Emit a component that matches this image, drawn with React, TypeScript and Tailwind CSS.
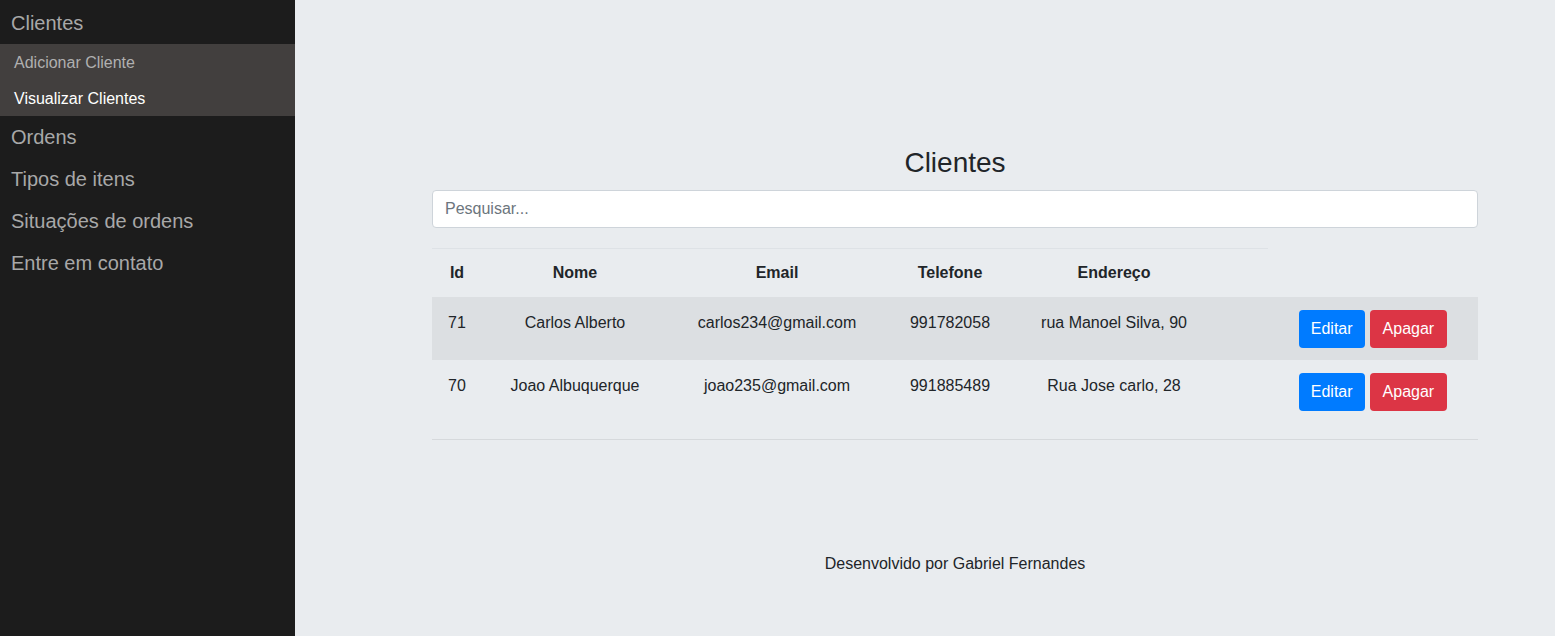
const subItems = [
  { label: "Adicionar Cliente", active: false },
  { label: "Visualizar Clientes", active: true },
];

const menuItems = ["Ordens", "Tipos de itens", "Situações de ordens", "Entre em contato"];

const clientes = [
  { id: 71, nome: "Carlos Alberto", email: "carlos234@gmail.com", telefone: "991782058", endereco: "rua Manoel Silva, 90" },
  { id: 70, nome: "Joao Albuquerque", email: "joao235@gmail.com", telefone: "991885489", endereco: "Rua Jose carlo, 28" },
];

// colunas: Id, Nome, Email, Telefone, Endereço, espaço, ações
const cols = "grid grid-cols-[50px_186px_218px_128px_200px_54px_210px]";

function Sidebar() {
  return (
    <aside className="flex h-full w-[295px] shrink-0 flex-col bg-[#1c1c1c]">
      <div className="flex h-[44px] items-center px-[11px] pt-[2px] text-[20px] text-[#a8a8a8]">Clientes</div>
      <div className="bg-[#423f3e]">
        {subItems.map((s) => (
          <div
            key={s.label}
            className={
              "flex h-[36px] items-center px-[14px] pt-[2px] text-[16px] " +
              (s.active ? "text-white" : "text-[#b0b0b0]")
            }
          >
            {s.label}
          </div>
        ))}
      </div>
      {menuItems.map((m) => (
        <div key={m} className="flex h-[42px] items-center px-[11px] text-[20px] text-[#a8a8a8]">
          {m}
        </div>
      ))}
    </aside>
  );
}

function ClientesTable() {
  return (
    <div className="mt-[20px] text-[16px] leading-[24px] text-[#212529]">
      <div className={cols}>
        <div className="col-span-6 flex border-t border-[#dee2e6] font-bold">
          <div className="w-[50px] py-[12px] text-center">Id</div>
          <div className="w-[186px] py-[12px] text-center">Nome</div>
          <div className="w-[218px] py-[12px] text-center">Email</div>
          <div className="w-[128px] py-[12px] text-center">Telefone</div>
          <div className="w-[200px] py-[12px] text-center">Endereço</div>
        </div>
      </div>
      <div className="border-b border-[#d6d9dc] pb-[16px]">
        {clientes.map((c, i) => (
          <div key={c.id} className={cols + " pt-[13px] pb-[12px] " + (i % 2 === 0 ? "bg-[#dcdfe2]" : "")}>
            <div className="pt-[1px] text-center">{c.id}</div>
            <div className="pt-[1px] text-center">{c.nome}</div>
            <div className="pt-[1px] text-center">{c.email}</div>
            <div className="pt-[1px] text-center">{c.telefone}</div>
            <div className="pt-[1px] text-center">{c.endereco}</div>
            <div />
            <div className="flex justify-center gap-[5px]">
              <button className="h-[38px] rounded-[4px] bg-[#007bff] px-[12px] text-white">Editar</button>
              <button className="h-[38px] rounded-[4px] bg-[#dc3545] px-[13px] text-white">Apagar</button>
            </div>
          </div>
        ))}
      </div>
    </div>
  );
}

export default function App() {
  return (
    <div className="flex h-[636px] w-full font-['Liberation_Sans',Arial,sans-serif]">
      <Sidebar />
      <main className="flex-1 bg-[#e9ecef] pl-[137px] pr-[77px] pt-[145px]">
        <div className="w-[1046px]">
          <h3 className="pt-[1px] text-center text-[28px] leading-[34px] text-[#212529]">Clientes</h3>
          <input
            type="text"
            placeholder="Pesquisar..."
            className="mt-[10px] h-[38px] w-full rounded-[4px] border border-[#ced4da] bg-white px-[12px] text-[16px] text-[#495057] placeholder:text-[#6c757d] focus:outline-none"
          />
          <ClientesTable />
          <div className="mt-[112px] text-center text-[16px] leading-[24px] text-[#212529]">
            Desenvolvido por Gabriel Fernandes
          </div>
        </div>
      </main>
    </div>
  );
}
